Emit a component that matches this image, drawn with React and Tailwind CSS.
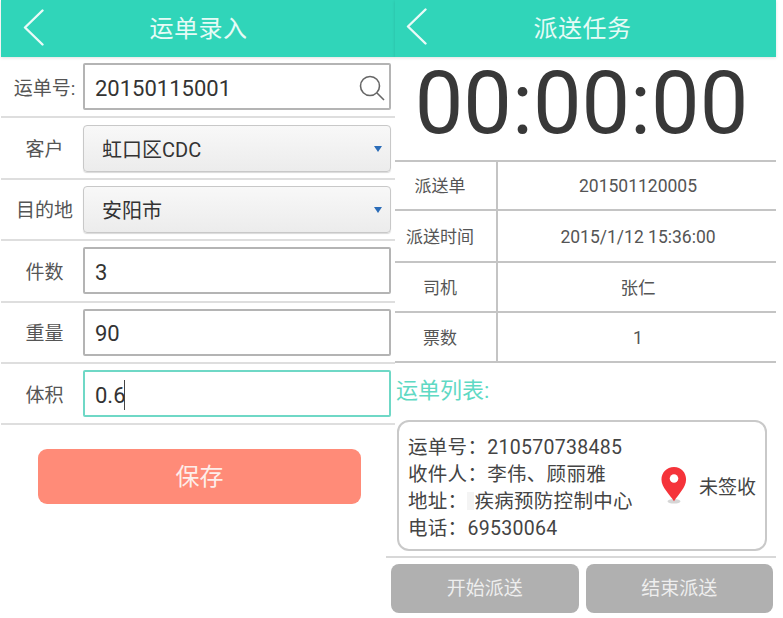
import React from "react";

const font = { fontFamily: '"Roboto", "Noto Sans CJK SC", sans-serif' };

function Back() {
  return (
    <svg width="24" height="38" viewBox="0 0 24 38" fill="none" stroke="#ffffff" strokeWidth="2.4" strokeLinecap="round" strokeLinejoin="round" className="opacity-90">
      <path d="M20.5 1.5 L3 18.5 L20.5 35.5" />
    </svg>
  );
}

function Header({ title, pad, shift = "" }) {
  return (
    <div className="relative h-[57px] bg-[#30d5b9] shadow-[0_1px_3px_rgba(0,0,0,0.12)] flex items-center justify-center">
      <div className={"absolute " + pad}><Back /></div>
      <span className={"text-[24px] text-[#e6fbf6] tracking-[0.5px] leading-none " + shift}>{title}</span>
    </div>
  );
}

function Row({ label, children, labelClass = "" }) {
  return (
    <div className="h-[61.4px] border-b-2 border-[#dedede] flex items-center pl-[5px] pr-[4px] shrink-0">
      <div className={"w-[77px] text-[19px] text-[#555] text-center leading-none whitespace-nowrap pt-[3px] " + labelClass}>{label}</div>
      {children}
    </div>
  );
}

function Field({ value, focus, caret, search }) {
  return (
    <div className={"relative flex-1 h-[47px] flex items-center pl-[10px] pt-[3px] text-[22px] text-[#333] bg-white rounded-[2px] border-2 " + (focus ? "border-[#6fd8c6]" : "border-[#b4b4b4]")}>
      <span>{value}</span>
      {caret && <span className="w-[1px] h-[30px] -ml-[2px] bg-[#444]" />}
      {search && (
        <svg className="absolute right-[3px] top-[9px]" width="28" height="28" viewBox="0 0 28 28" fill="none" stroke="#666" strokeWidth="1.6">
          <circle cx="12" cy="12" r="9.5" />
          <path d="M19 19 L26 26" />
        </svg>
      )}
    </div>
  );
}

function Select({ value }) {
  return (
    <div className="relative flex-1 h-[47px] flex items-center pl-[18px] pt-[4px] text-[20px] text-[#333] rounded-[4px] border border-[#c8c8c8] bg-gradient-to-b from-[#f8f8f8] to-[#ececec] shadow-[0_1px_1px_rgba(0,0,0,0.15)]">
      <span>{value}</span>
      <span className="absolute right-[8px] top-[20px] w-0 h-0 border-l-[4px] border-r-[4px] border-t-[6px] border-l-transparent border-r-transparent border-t-[#2b6cb8]" />
    </div>
  );
}

function TableRow({ label, value, h }) {
  return (
    <div className={"flex border-b-2 border-[#c4c4c4] text-[#555] " + h}>
      <div className="w-[103px] flex items-center justify-center border-r-2 border-[#c4c4c4] text-[17px] pr-[11px] pt-[3px]">{label}</div>
      <div className="flex-1 flex items-center justify-center text-[17.5px] pl-[2px] pt-[2px]">{value}</div>
    </div>
  );
}

function Pin() {
  return (
    <svg width="28" height="39" viewBox="0 0 30 42">
      <ellipse cx="15" cy="38" rx="7" ry="2.5" fill="#bbb" opacity="0.6" />
      <path d="M15 1 C7 1 1.5 7 1.5 14.5 C1.5 23 10 30 15 38 C20 30 28 23 28 14.5 C28 7 23 1 15 1 Z" fill="#f5333a" />
      <circle cx="15" cy="13.5" r="4.6" fill="#fff" />
    </svg>
  );
}

export default function App() {
  return (
    <div className="w-[783px] h-[618px] bg-white flex overflow-hidden" style={font}>
      <div className="w-[394px] ml-[1px] shrink-0 flex flex-col">
        <Header title="运单录入" pad="left-[21px] top-[9px]" shift="ml-[1px]" />
        <Row label="运单号:" labelClass="text-[19px]"><Field value="20150115001" search /></Row>
        <Row label="客户"><Select value="虹口区CDC" /></Row>
        <Row label="目的地"><Select value="安阳市" /></Row>
        <Row label="件数"><Field value="3" /></Row>
        <Row label="重量"><Field value="90" /></Row>
        <Row label="体积"><Field value="0.6" focus caret /></Row>
        <div className="mt-[24px] ml-[37px] mr-[34px] h-[55px] rounded-[9px] bg-[#ff8b78] flex items-center justify-center text-[24px] text-[#fdeeea]">保存</div>
      </div>

      <div className="w-[381px] shrink-0 flex flex-col">
        <Header title="派送任务" pad="left-[10px] top-[8px]" shift="-ml-[6px]" />
        <div className="h-[105px] border-b-2 border-[#c4c4c4] flex items-start justify-center text-[86.5px] leading-none text-[#383838] pt-[4px] pr-[8px]">00:00:00</div>
        <TableRow label="派送单" value="201501120005" h="h-[49px]" />
        <TableRow label="派送时间" value="2015/1/12 15:36:00" h="h-[52px]" />
        <TableRow label="司机" value="张仁" h="h-[50px]" />
        <TableRow label="票数" value="1" h="h-[50px]" />
        <div className="h-[57px] pl-[1px] pt-[17px] text-[22px] leading-none text-[#5fd9c4]">运单列表:</div>
        <div className="ml-[2px] w-[370px] h-[131px] rounded-[12px] border-2 border-[#c9c9c9] flex items-center pl-[9px] text-[#444]">
          <div className="flex-1 text-[19.5px] tracking-[0.3px] leading-[27px] whitespace-nowrap pt-[4px]">
            <div>运单号：210570738485</div>
            <div>收件人：李伟、顾丽雅</div>
            <div className="flex items-center">地址：<span className="w-[7px] h-[18px] bg-[#f4f4f4]" />疾病预防控制中心</div>
            <div>电话：69530064</div>
          </div>
          <div className="flex items-center gap-[11px] pr-[9px]">
            <Pin />
            <span className="text-[19px] leading-none mt-[4px]">未签收</span>
          </div>
        </div>
        <div className="mt-[5px] -ml-[9px] h-[2px] bg-[#d8d8d8]" />
        <div className="mt-[6px] -ml-[4px] mr-[3px] flex gap-[7px]">
          <div className="flex-1 h-[49px] rounded-[8px] bg-[#b0b0b0] flex items-center justify-center text-[19px] pt-[2px] text-[#eeeeee]">开始派送</div>
          <div className="flex-1 h-[49px] rounded-[8px] bg-[#b0b0b0] flex items-center justify-center text-[19px] pt-[2px] text-[#eeeeee]">结束派送</div>
        </div>
      </div>
    </div>
  );
}
